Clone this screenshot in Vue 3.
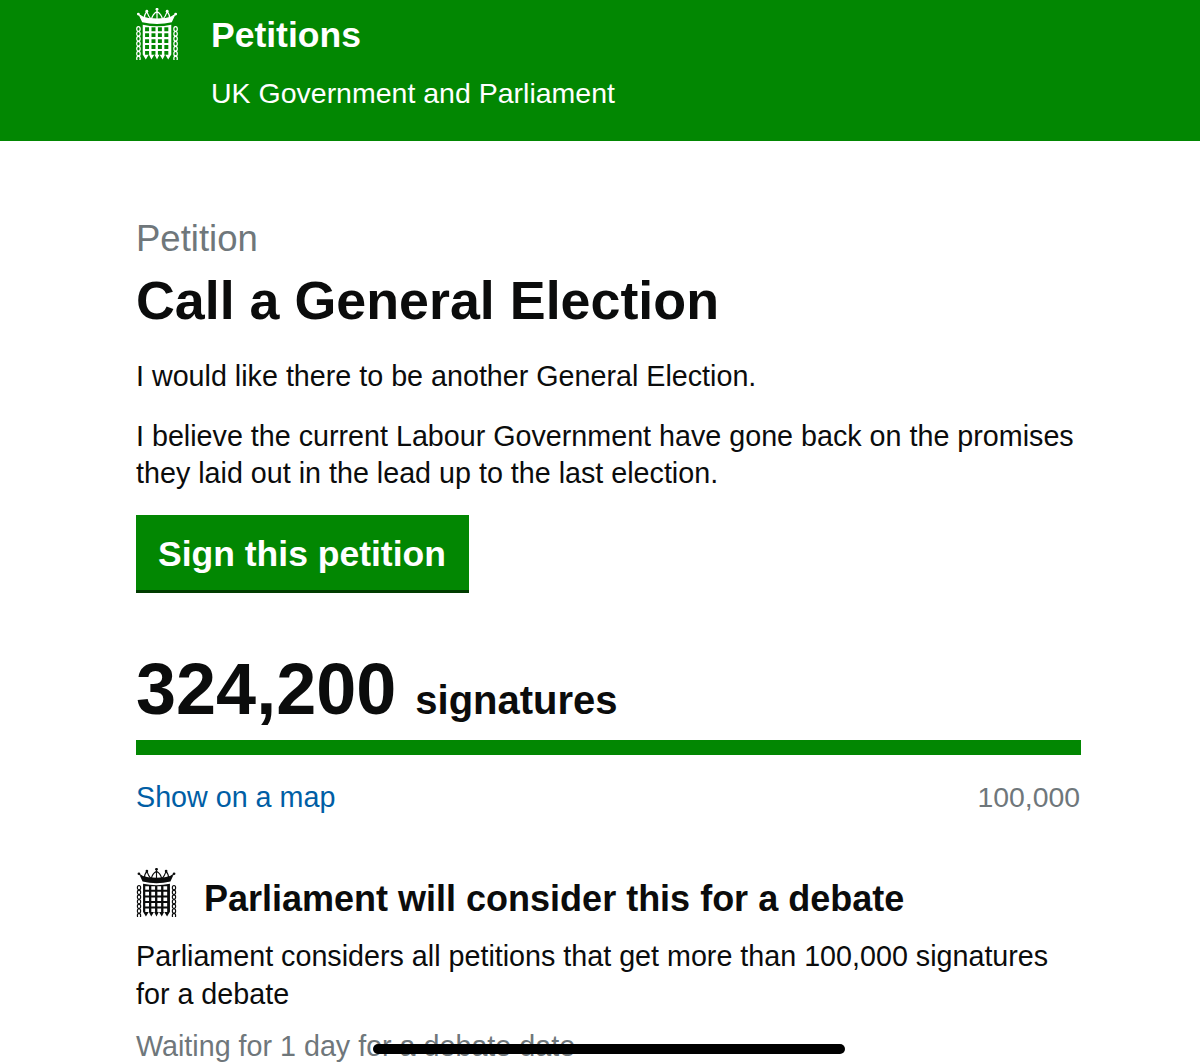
<script setup>
const cols = [0, 1, 2, 3]
const rows = [0, 1, 2, 3, 4]
let holes = ''
for (const r of rows) for (const c of cols) {
  const x = 8.8 + c * 6.3, y = 19 + r * 5.8
  holes += `M${x} ${y}h3.9v3.7h-3.9z`
}
const gridPath =
  'M6.5 16.5Q20.5 19.5 34.5 16.5V45.5L31.5 50.5L28.5 45.5L26 50.5L23 45.5L20.5 50.5L18 45.5L15 50.5L12.5 45.5L9.5 50.5L6.5 45.5Z' + holes
const links = [0, 1, 2, 3, 4, 5, 6]
const linkY = i => 20.5 + i * 4.85
const jewels = [[2.2, 6], [10.5, 3.2], [20.5, 1.2], [30.5, 3.2], [38.8, 6]]
</script>

<template>
  <div class="page">
    <svg width="0" height="0" class="defs" aria-hidden="true">
      <symbol id="portcullis" viewBox="0 0 41 51">
        <path d="M3 7.5Q20.5 13 38 7.5L35 14Q20.5 17.5 6 14Z" fill="currentColor" />
        <path d="M2.5 6.5Q7 9 8 11M10.5 3.5Q7.5 7 8 11M10.5 3.5Q12 8 15 11.5M20.5 2V12M20.5 3.5Q16 6 15 11.5M20.5 3.5Q25 6 26 11.5M30.5 3.5Q29 8 26 11.5M30.5 3.5Q33.5 7 33 11M38.5 6.5Q34 9 33 11" fill="none" stroke="currentColor" stroke-width="1.2" />
        <circle v-for="j in jewels" :key="j[0]" :cx="j[0]" :cy="j[1]" r="1.4" fill="currentColor" />
        <path :d="gridPath" fill="currentColor" fill-rule="evenodd" />
        <g v-for="x in [2.3, 38.7]" :key="x">
          <ellipse v-for="i in links" :key="i" :cx="x" :cy="linkY(i)" rx="1.7" ry="2.3" fill="none" stroke="currentColor" stroke-width="1.2" />
        </g>
      </symbol>
    </svg>

    <header class="header">
      <div class="wrap header-inner">
        <svg class="logo"><use href="#portcullis" /></svg>
        <div class="titles">
          <div class="site">Petitions</div>
          <div class="sub">UK Government and Parliament</div>
        </div>
      </div>
    </header>

    <main class="wrap main">
      <div class="eyebrow">Petition</div>
      <h1 class="title">Call a General Election</h1>
      <p class="p first">I would like there to be another General Election.</p>
      <p class="p second">I believe the current Labour Government have gone back on the promises they laid out in the lead up to the last election.</p>
      <a class="button">Sign this petition</a>

      <div class="count">
        <span class="num">324,200</span>
        <span class="label">signatures</span>
      </div>
      <div class="bar"></div>
      <div class="meta">
        <a class="link">Show on a map</a>
        <span class="target">100,000</span>
      </div>

      <div class="debate-head">
        <svg class="logo small"><use href="#portcullis" /></svg>
        <h2 class="h2">Parliament will consider this for a debate</h2>
      </div>
      <p class="p debate">Parliament considers all petitions that get more than 100,000 signatures for a debate</p>
      <p class="waiting">Waiting for 1 day for a debate date</p>
    </main>

    <div class="home-indicator"></div>
  </div>
</template>

<style>
html, body { margin: 0; background: #fff; overflow: hidden; }
</style>

<style scoped>
.page {
  height: 1064px;
  overflow: hidden;
  font-family: "Liberation Sans", Arial, sans-serif;
  color: #0b0c0c;
  background: #fff;
}
.defs { position: absolute; }
.wrap { width: 945px; margin-left: 136px; }
.header { height: 141px; background: #028702; color: #fff; }
.header-inner { display: flex; }
.logo { width: 42px; height: 52px; margin-top: 8px; color: #fff; flex: none; }
.titles { margin-left: 33px; padding-top: 13px; }
.site { font-size: 35.5px; font-weight: 700; line-height: 44px; }
.sub { font-size: 28.5px; line-height: 34px; margin-top: 19px; }

.main { padding-top: 78px; }
.eyebrow { font-size: 36.5px; line-height: 40px; color: #6f777b; }
.title { margin: 11px 0 0; font-size: 53.8px; line-height: 60px; font-weight: 700; }
.p { margin: 0; font-size: 28.7px; line-height: 37px; }
.first { margin-top: 28px; }
.second { margin-top: 23px; }
.button {
  display: inline-block;
  margin-top: 23px;
  padding: 17px 23px 14px 22px;
  background: #028702;
  border-bottom: 3px solid #003c00;
  color: #fff;
  font-size: 35.5px;
  line-height: 44px;
  font-weight: 700;
}
.count { display: flex; align-items: baseline; margin-top: 51px; height: 90px; }
.num { font-size: 72px; line-height: 90px; font-weight: 700; }
.label { margin-left: 19px; font-size: 40px; font-weight: 700; }
.bar { height: 15px; margin-top: 6px; background: #028702; }
.meta { display: flex; justify-content: space-between; margin-top: 24px; font-size: 28.7px; line-height: 36px; }
.link { color: #005ea5; }
.target { color: #6f777b; font-size: 28.4px; margin-right: 1px; }
.debate-head { display: flex; align-items: flex-start; margin-top: 53px; }
.small { width: 41px; height: 49px; margin-top: 0; margin-left: 0; color: #0b0c0c; flex: none; }
.h2 { margin: 9px 0 0 27px; font-size: 36px; line-height: 44px; font-weight: 700; }
.debate { margin-top: 16px; line-height: 38px; }
.waiting { margin: 15px 0 0; font-size: 28.7px; line-height: 36px; color: #6f777b; }
.home-indicator {
  position: fixed;
  left: 373px;
  top: 1044px;
  width: 472px;
  height: 10px;
  border-radius: 5px;
  background: #000;
}
</style>
